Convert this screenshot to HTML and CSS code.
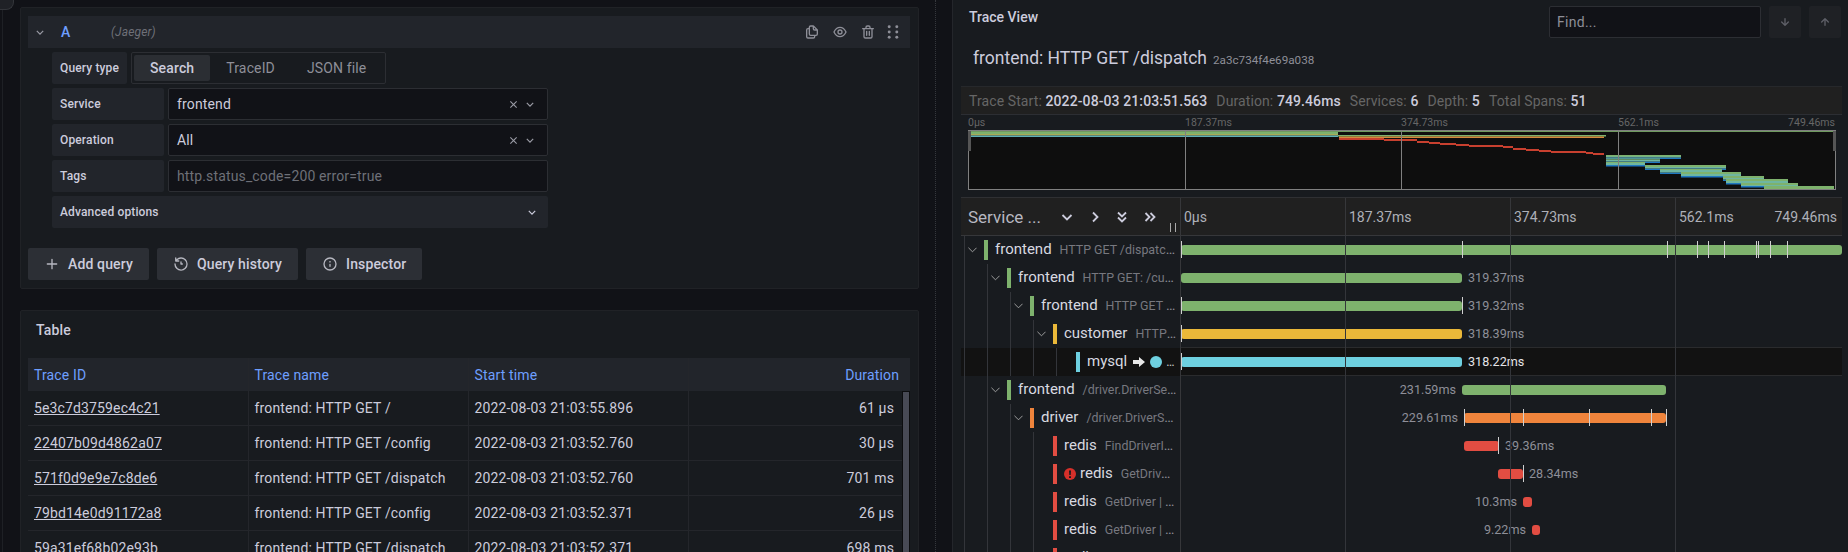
FILE: index.html
```html
<!DOCTYPE html>
<html lang="en">
<head>
<meta charset="utf-8">
<title>Explore</title>
<link rel="stylesheet" href="styles.css">
</head>
<body>
<main class="page">
  <section class="pane">
    <div class="corner"></div>
    <div class="card query-card">
      <div class="query-head">
        <svg class="chev head-chev" viewBox="0 0 10 6"><path d="M1 1l4 4 4-4"/></svg>
        <span class="ref">A</span>
        <span class="ds">(Jaeger)</span>
        <div class="head-actions">
          <svg class="ico" viewBox="0 0 24 24"><path d="M21,8.94a1.31,1.31,0,0,0-.06-.27l0-.09a1.07,1.07,0,0,0-.19-.28h0l-6-6h0a1.07,1.07,0,0,0-.28-.19.32.32,0,0,0-.09,0A.88.88,0,0,0,14.05,2H10A3,3,0,0,0,7,5V6H6A3,3,0,0,0,3,9V19a3,3,0,0,0,3,3h8a3,3,0,0,0,3-3V18h1a3,3,0,0,0,3-3V9S21,9,21,8.94ZM15,5.41,17.59,8H16a1,1,0,0,1-1-1ZM15,19a1,1,0,0,1-1,1H6a1,1,0,0,1-1-1V9A1,1,0,0,1,6,8H7v7a3,3,0,0,0,3,3h5Zm4-4a1,1,0,0,1-1,1H10a1,1,0,0,1-1-1V5a1,1,0,0,1,1-1h3V7a3,3,0,0,0,3,3h3Z"/></svg>
          <svg class="ico" viewBox="0 0 24 24"><path d="M21.92,11.6C19.9,6.91,16.1,4,12,4S4.1,6.91,2.08,11.6a1,1,0,0,0,0,.8C4.1,17.09,7.9,20,12,20s7.9-2.91,9.92-7.6A1,1,0,0,0,21.92,11.6ZM12,18c-3.17,0-6.17-2.29-7.9-6C5.83,8.29,8.83,6,12,6s6.17,2.29,7.9,6C18.17,15.71,15.17,18,12,18ZM12,8a4,4,0,1,0,4,4A4,4,0,0,0,12,8Zm0,6a2,2,0,1,1,2-2A2,2,0,0,1,12,14Z"/></svg>
          <svg class="ico" viewBox="0 0 24 24"><path d="M10,18a1,1,0,0,0,1-1V11a1,1,0,0,0-2,0v6A1,1,0,0,0,10,18ZM20,6H16V5a3,3,0,0,0-3-3H11A3,3,0,0,0,8,5V6H4A1,1,0,0,0,4,8H5V19a3,3,0,0,0,3,3h8a3,3,0,0,0,3-3V8h1a1,1,0,0,0,0-2ZM10,5a1,1,0,0,1,1-1h2a1,1,0,0,1,1,1V6H10Zm7,14a1,1,0,0,1-1,1H8a1,1,0,0,1-1-1V8H17Zm-3-1a1,1,0,0,0,1-1V11a1,1,0,0,0-2,0v6A1,1,0,0,0,14,18Z"/></svg>
          <svg class="ico drag" viewBox="0 0 24 24"><circle cx="6.300" cy="4" r="2.200"/><circle cx="6.300" cy="12" r="2.200"/><circle cx="6.300" cy="20" r="2.200"/><circle cx="17.700" cy="4" r="2.200"/><circle cx="17.700" cy="12" r="2.200"/><circle cx="17.700" cy="20" r="2.200"/></svg>
        </div>
      </div>
      <div class="form">
        <div class="form-row">
          <label class="lbl lbl-auto">Query type</label>
          <div class="radio">
            <span class="radio-opt active">Search</span>
            <span class="radio-opt">TraceID</span>
            <span class="radio-opt">JSON file</span>
          </div>
        </div>
        <div class="form-row">
          <label class="lbl">Service</label>
          <div class="input"><span>frontend</span>
            <svg class="x" viewBox="0 0 10 10"><path d="M1.500 1.500l7 7M8.500 1.500l-7 7"/></svg>
            <svg class="chev" viewBox="0 0 10 6"><path d="M1 1l4 4 4-4"/></svg>
          </div>
        </div>
        <div class="form-row">
          <label class="lbl">Operation</label>
          <div class="input"><span>All</span>
            <svg class="x" viewBox="0 0 10 10"><path d="M1.500 1.500l7 7M8.500 1.500l-7 7"/></svg>
            <svg class="chev" viewBox="0 0 10 6"><path d="M1 1l4 4 4-4"/></svg>
          </div>
        </div>
        <div class="form-row">
          <label class="lbl">Tags</label>
          <div class="input placeholder"><span>http.status_code=200 error=true</span></div>
        </div>
        <div class="form-row">
          <div class="advanced"><span>Advanced options</span>
            <svg class="chev strong" viewBox="0 0 10 6"><path d="M1 1l4 4 4-4"/></svg>
          </div>
        </div>
      </div>
      <div class="buttons">
        <button class="btn"><svg class="ico btn-ico" viewBox="0 0 24 24"><path d="M19,11H13V5a1,1,0,0,0-2,0v6H5a1,1,0,0,0,0,2h6v6a1,1,0,0,0,2,0V13h6a1,1,0,0,0,0-2Z"/></svg>Add query</button>
        <button class="btn"><svg class="ico btn-ico" viewBox="0 0 24 24"><path d="M12,2A10,10,0,0,0,5.120,4.770V3a1,1,0,0,0-2,0V7.500a1,1,0,0,0,1,1H8.620a1,1,0,0,0,0-2H6.220A8,8,0,1,1,4,12a1,1,0,0,0-2,0A10,10,0,1,0,12,2Zm0,6a1,1,0,0,0-1,1v3a1,1,0,0,0,1,1h2a1,1,0,0,0,0-2H13V9A1,1,0,0,0,12,8Z"/></svg>Query history</button>
        <button class="btn"><svg class="ico btn-ico" viewBox="0 0 24 24"><path d="M12,2A10,10,0,1,0,22,12,10,10,0,0,0,12,2Zm0,18a8,8,0,1,1,8-8A8,8,0,0,1,12,20Zm0-8.500a1,1,0,0,0-1,1v3a1,1,0,0,0,2,0v-3A1,1,0,0,0,12,11.500Zm0-4a1.250,1.250,0,1,0,1.250,1.250A1.250,1.250,0,0,0,12,7.500Z"/></svg>Inspector</button>
      </div>
    </div>

    <div class="card table-card">
      <h2 class="table-title">Table</h2>
      <div class="tbl">
        <div class="tr th">
          <div class="c">Trace ID</div><div class="c">Trace name</div><div class="c">Start time</div><div class="c r">Duration</div>
        </div>
        <div class="tbody">
          <div class="tr"><div class="c"><a href="#">5e3c7d3759ec4c21</a></div><div class="c">frontend: HTTP GET /</div><div class="c">2022-08-03 21:03:55.896</div><div class="c r">61 μs</div></div>
          <div class="tr"><div class="c"><a href="#">22407b09d4862a07</a></div><div class="c">frontend: HTTP GET /config</div><div class="c">2022-08-03 21:03:52.760</div><div class="c r">30 μs</div></div>
          <div class="tr"><div class="c"><a href="#">571f0d9e9e7c8de6</a></div><div class="c">frontend: HTTP GET /dispatch</div><div class="c">2022-08-03 21:03:52.760</div><div class="c r">701 ms</div></div>
          <div class="tr"><div class="c"><a href="#">79bd14e0d91172a8</a></div><div class="c">frontend: HTTP GET /config</div><div class="c">2022-08-03 21:03:52.371</div><div class="c r">26 μs</div></div>
          <div class="tr"><div class="c"><a href="#">59a31ef68b02e93b</a></div><div class="c">frontend: HTTP GET /dispatch</div><div class="c">2022-08-03 21:03:52.371</div><div class="c r">698 ms</div></div>
          <div class="scroll"></div>
        </div>
      </div>
    </div>
  </section>

  <div class="splitter"></div>

  <section class="trace">
    <div class="trace-top">
      <h2 class="trace-panel-title">Trace View</h2>
      <div class="find">Find...</div>
      <button class="nav"><svg class="ico" viewBox="0 0 24 24"><path d="M17.710,11.290a1,1,0,0,0-1.420,0L13,14.590V7a1,1,0,0,0-2,0v7.590l-3.290-3.300a1,1,0,0,0-1.420,1.420l5,5a1,1,0,0,0,1.420,0l5-5A1,1,0,0,0,17.710,11.290Z"/></svg></button>
      <button class="nav"><svg class="ico" viewBox="0 0 24 24"><path d="M17.710,11.290l-5-5a1,1,0,0,0-1.420,0l-5,5a1,1,0,0,0,1.420,1.420L11,9.410V17a1,1,0,0,0,2,0V9.410l3.290,3.300a1,1,0,0,0,1.420-1.420Z"/></svg></button>
    </div>
    <div class="trace-title"><span class="tt-name">frontend: HTTP GET /dispatch</span><span class="tt-id">2a3c734f4e69a038</span></div>
    <div class="stats">
      <span>Trace Start: <b>2022-08-03 21:03:51.563</b></span>
      <span>Duration: <b>749.46ms</b></span>
      <span>Services: <b>6</b></span>
      <span>Depth: <b>5</b></span>
      <span>Total Spans: <b>51</b></span>
    </div>
    <div class="mini-labels">
      <span>0μs</span><span>187.37ms</span><span>374.73ms</span><span class="mini-last"><span>562.1ms</span><span>749.46ms</span></span>
    </div>
    <svg class="mini" viewBox="968 130 868 60" width="868" height="60">
      <rect x="968" y="130" width="868" height="60" fill="#0e0e0e"/>
      <rect x="970" y="131" width="865" height="1" fill="#6f9a5f"/>
      <rect x="970" y="132" width="368" height="2" fill="#7eb26d"/>
      <rect x="970" y="134" width="368" height="1.500" fill="#a9ab55"/>
      <rect x="970" y="135.500" width="368" height="1.500" fill="#5fb0b7"/>
      <rect x="1338" y="135" width="268" height="1.500" fill="#7eb26d"/>
      <rect x="1339" y="136.500" width="265" height="1.500" fill="#d58a3c"/>
      <g fill="#c8402f">
        <rect x="1339" y="138" width="45" height="2"/><rect x="1384" y="139" width="33" height="2"/>
        <rect x="1417" y="141" width="12" height="2"/><rect x="1429" y="142" width="11" height="2"/>
        <rect x="1440" y="143" width="16" height="2"/><rect x="1456" y="144" width="13" height="2"/>
        <rect x="1469" y="145" width="34" height="2"/><rect x="1503" y="146" width="10" height="2"/>
        <rect x="1513" y="148" width="13" height="2"/><rect x="1526" y="149" width="13" height="2"/>
        <rect x="1539" y="150" width="12" height="2"/><rect x="1551" y="151" width="35" height="2"/>
        <rect x="1586" y="152" width="7" height="2"/><rect x="1593" y="153" width="11" height="2"/>
      </g>
      <g fill="#1f78c1">
        <rect x="1606" y="157.500" width="75" height="1.500"/><rect x="1606" y="161.500" width="54" height="1.500"/><rect x="1606" y="165" width="39" height="1.500"/>
        <rect x="1645" y="168.500" width="81" height="1.500"/><rect x="1660" y="172.500" width="62" height="1.500"/><rect x="1681" y="176" width="60" height="1.500"/>
        <rect x="1723" y="179.500" width="41" height="1.500"/><rect x="1726" y="183" width="62" height="1.500"/><rect x="1741" y="186" width="57" height="1.500"/>
      </g>
      <g fill="#6fb6a0">
        <rect x="1606" y="156" width="75" height="1.500"/><rect x="1606" y="159.500" width="54" height="2"/><rect x="1606" y="163" width="39" height="2"/>
        <rect x="1645" y="167" width="81" height="1.500"/><rect x="1660" y="170" width="62" height="2.500"/><rect x="1681" y="174" width="60" height="2"/>
        <rect x="1723" y="178" width="41" height="1.500"/><rect x="1726" y="181" width="62" height="2"/><rect x="1741" y="185" width="57" height="1"/>
      </g>
      <g fill="#7eb26d">
        <rect x="1606" y="155" width="75" height="1.500"/><rect x="1606" y="158.500" width="54" height="1"/><rect x="1606" y="162" width="39" height="1"/>
        <rect x="1645" y="165" width="81" height="2"/><rect x="1660" y="169" width="62" height="1"/><rect x="1681" y="172" width="60" height="2"/>
        <rect x="1723" y="176" width="41" height="2"/><rect x="1726" y="179" width="62" height="2"/><rect x="1741" y="183" width="57" height="2"/>
        <rect x="1764" y="186" width="70" height="3"/>
      </g>
      <g fill="#808080">
        <rect x="968" y="130" width="1" height="60"/><rect x="1835" y="130" width="1" height="60"/>
        <rect x="968" y="130" width="868" height="1"/><rect x="968" y="189" width="868" height="1"/>
        <rect x="1185" y="130" width="1" height="60"/><rect x="1401" y="130" width="1" height="60"/><rect x="1618" y="130" width="1" height="60"/>
      </g>
      <rect x="968" y="131" width="3" height="20" fill="#555"/>
      <rect x="1833" y="131" width="3" height="20" fill="#555"/>
    </svg>

    <div class="tv-head">
      <div class="tv-left">
        <span class="tv-service">Service ...</span>
        <div class="tv-ctrls">
          <svg class="ctl" viewBox="0 0 12 12"><path d="M1.500 4l4.500 4.500L10.500 4"/></svg>
          <svg class="ctl" viewBox="0 0 12 12"><path d="M4 1.500L8.500 6 4 10.500"/></svg>
          <svg class="ctl" viewBox="0 0 12 12"><path d="M2 1.500l4 4 4-4M2 6.500l4 4 4-4"/></svg>
          <svg class="ctl" viewBox="0 0 12 12"><path d="M1.500 2l4 4-4 4M6.500 2l4 4-4 4"/></svg>
        </div>
        <span class="tv-grip"></span>
      </div>
      <div class="tv-ticks"><span>0μs</span><span>187.37ms</span><span>374.73ms</span><span class="tv-last"><span>562.1ms</span><span>749.46ms</span></span></div>
    </div>

    <div class="rows">
      <div class="grid-lines"><i></i><i></i><i></i></div>

      <div class="row">
        <div class="left"><span class="slot"><svg class="tw" viewBox="0 0 10 6"><path d="M.500.500L5 5 9.500.500"/></svg></span><span class="sbar green"></span><span class="txt"><b>frontend</b><em>HTTP GET /dispatch | GET /dispatch</em></span></div>
        <div class="tl">
          <span class="bar green" style="left:0;width:661px"></span>
          <i class="t" style="left:0"></i><i class="t" style="left:281px"></i><i class="t" style="left:486px"></i><i class="t" style="left:516px"></i><i class="t" style="left:527px"></i><i class="t" style="left:543px"></i><i class="t" style="left:575px"></i><i class="t" style="left:577px"></i><i class="t" style="left:589px"></i><i class="t" style="left:606px"></i>
        </div>
      </div>

      <div class="row">
        <div class="left"><span class="g"></span><span class="slot"><svg class="tw" viewBox="0 0 10 6"><path d="M.500.500L5 5 9.500.500"/></svg></span><span class="sbar green"></span><span class="txt"><b>frontend</b><em>HTTP GET: /customer | GET /customer</em></span></div>
        <div class="tl"><span class="bar green" style="left:0;width:281px"></span><span class="dur" style="left:287px">319.37ms</span></div>
      </div>

      <div class="row">
        <div class="left"><span class="g"></span><span class="g"></span><span class="slot"><svg class="tw" viewBox="0 0 10 6"><path d="M.500.500L5 5 9.500.500"/></svg></span><span class="sbar green"></span><span class="txt"><b>frontend</b><em>HTTP GET | GET /customer request</em></span></div>
        <div class="tl"><span class="bar green" style="left:0;width:281px"></span><i class="t" style="left:0"></i><i class="t" style="left:281px"></i><span class="dur" style="left:287px">319.32ms</span></div>
      </div>

      <div class="row">
        <div class="left"><span class="g"></span><span class="g"></span><span class="g"></span><span class="slot"><svg class="tw" viewBox="0 0 10 6"><path d="M.500.500L5 5 9.500.500"/></svg></span><span class="sbar yellow"></span><span class="txt"><b>customer</b><em>HTTP GET /customer request</em></span></div>
        <div class="tl"><span class="bar yellow" style="left:0;width:281px"></span><i class="t" style="left:0"></i><span class="dur" style="left:287px">318.39ms</span></div>
      </div>

      <div class="row row-hl">
        <div class="left"><span class="g"></span><span class="g"></span><span class="g"></span><span class="g"></span><span class="slot"></span><span class="sbar cyan"></span><span class="txt"><b>mysql</b><svg class="peer" viewBox="0 0 12 10"><path d="M0 3h6V0l6 5-6 5V7H0z"/></svg><span class="dot"></span><em>…</em></span></div>
        <div class="tl"><span class="bar cyan" style="left:0;width:281px"></span><i class="t" style="left:0"></i><span class="dur bright" style="left:287px">318.22ms</span></div>
      </div>

      <div class="row">
        <div class="left"><span class="g"></span><span class="slot"><svg class="tw" viewBox="0 0 10 6"><path d="M.500.500L5 5 9.500.500"/></svg></span><span class="sbar green"></span><span class="txt"><b>frontend</b><em>/driver.DriverService/FindNearest</em></span></div>
        <div class="tl"><span class="bar green" style="left:281px;width:204px"></span><span class="dur end" style="right:386px">231.59ms</span></div>
      </div>

      <div class="row">
        <div class="left"><span class="g"></span><span class="g"></span><span class="slot"><svg class="tw" viewBox="0 0 10 6"><path d="M.500.500L5 5 9.500.500"/></svg></span><span class="sbar orange"></span><span class="txt"><b>driver</b><em>/driver.DriverService/FindNearest</em></span></div>
        <div class="tl"><span class="bar orange" style="left:283px;width:202px"></span><i class="t" style="left:283px"></i><i class="t" style="left:342px"></i><i class="t" style="left:408px"></i><i class="t" style="left:470px"></i><i class="t" style="left:485px"></i><span class="dur end" style="right:384px">229.61ms</span></div>
      </div>

      <div class="row">
        <div class="left"><span class="g"></span><span class="g"></span><span class="g"></span><span class="slot"></span><span class="sbar red"></span><span class="txt"><b>redis</b><em>FindDriverIDs | FindDriverIDs</em></span></div>
        <div class="tl"><span class="bar red" style="left:283px;width:35px"></span><i class="t" style="left:317px"></i><span class="dur" style="left:324px">39.36ms</span></div>
      </div>

      <div class="row">
        <div class="left"><span class="g"></span><span class="g"></span><span class="g"></span><span class="slot"></span><span class="sbar red"></span><span class="txt"><svg class="err" viewBox="0 0 12 12"><circle cx="6" cy="6" r="6"/><path class="err-mark" d="M5 2.500h2L6.700 7H5.300zM5 8.200h2V10H5z"/></svg><b>redis</b><em>GetDriver | GetDriver</em></span></div>
        <div class="tl"><span class="bar red" style="left:317px;width:25px"></span><i class="t" style="left:342px"></i><span class="dur" style="left:348px">28.34ms</span></div>
      </div>

      <div class="row">
        <div class="left"><span class="g"></span><span class="g"></span><span class="g"></span><span class="slot"></span><span class="sbar red"></span><span class="txt"><b>redis</b><em>GetDriver | GetDriver</em></span></div>
        <div class="tl"><span class="bar red" style="left:342px;width:9px"></span><span class="dur end" style="right:325px">10.3ms</span></div>
      </div>

      <div class="row">
        <div class="left"><span class="g"></span><span class="g"></span><span class="g"></span><span class="slot"></span><span class="sbar red"></span><span class="txt"><b>redis</b><em>GetDriver | GetDriver</em></span></div>
        <div class="tl"><span class="bar red" style="left:351px;width:8px"></span><span class="dur end" style="right:316px">9.22ms</span></div>
      </div>

      <div class="row">
        <div class="left"><span class="g"></span><span class="g"></span><span class="g"></span><span class="slot"></span><span class="sbar red"></span><span class="txt"><b>redis</b><em>GetDriver | GetDriver</em></span></div>
        <div class="tl"></div>
      </div>
    </div>
  </section>
</main>
</body>
</html>
```

FILE: styles.css
```css
* { box-sizing: border-box; }
html, body { margin: 0; height: 100%; background: #111217; overflow: hidden; }
body { font-family: Roboto, "Liberation Sans", sans-serif; color: #ccccdc; font-size: 14px; }
.page { display: flex; width: 1848px; height: 552px; overflow: hidden; }

/* left pane */
.pane { position: relative; width: 933px; margin-left: 2px; border-left: 1px solid #1e2025; padding: 7px 0 0 17px; display: flex; flex-direction: column; gap: 21px; flex: none; letter-spacing: 0.01em; }
.corner { position: absolute; left: -3px; top: 0; width: 14px; height: 10px; background: #1f2126; border-radius: 0 0 8px 0; border: 1px solid #33353a; border-width: 0 1px 1px 0; }
.card { width: 899px; background: #181b1f; border: 1px solid #202226; border-radius: 2px; padding: 8px 8px 8px 7px; flex: none; }
.query-head { display: flex; align-items: center; height: 32px; background: #22252b; padding-left: 8px; }
.chev { width: 8px; height: 5px; fill: none; stroke: #9a9ba5; stroke-width: 1.500; flex: none; }
.ref { color: #6e9fff; font-size: 14px; font-weight: 500; margin-left: 17px; width: 50px; }
.ds { color: #6e7078; font-size: 12px; font-style: italic; }
.head-actions { margin-left: auto; display: flex; gap: 12px; padding-right: 9px; }
.ico { fill: #8e8f98; flex: none; width: 16px; height: 16px; }
.ico.drag { margin-left: -3px; }
.form { display: flex; flex-direction: column; gap: 4px; margin: 4px 0 0 24px; width: 496px; }
.form-row { display: flex; gap: 4px; height: 32px; }
.lbl { width: 112px; background: #22252b; border-radius: 2px; padding: 0 8px; display: flex; align-items: center; font-size: 12px; font-weight: 500; color: #ccccdc; flex: none; white-space: nowrap; }
.lbl-auto { width: 75px; }
.radio { display: flex; align-items: center; border: 1px solid #2c2e33; border-radius: 2px; padding: 0 3px 0 2px; height: 32px; }
.radio-opt { height: 26px; display: flex; align-items: center; color: #8e8f98; font-size: 14px; padding: 0 16px; border-radius: 2px; white-space: nowrap; }
.radio-opt.active { background: #2b2e33; color: #ccccdc; font-weight: 500; }
.input { flex: 1; display: flex; align-items: center; background: #111217; border: 1px solid #2c2e33; border-radius: 2px; padding: 0 13px 0 8px; font-size: 14px; }
.input span { flex: 1; }
.input .x { width: 9px; height: 9px; fill: none; stroke: #9a9ba5; stroke-width: 1.200; margin-right: 8px; }
.placeholder { color: #6e7078; }
.advanced { flex: 1; display: flex; align-items: center; justify-content: space-between; background: #22252b; border-radius: 2px; padding: 0 12px 0 8px; font-size: 12px; font-weight: 500; }
.chev.strong { stroke: #ccccdc; }
.buttons { display: flex; gap: 8px; margin-top: 20px; }
.btn { display: flex; align-items: center; gap: 8px; height: 32px; border: 0; border-radius: 2px; background: #2c2f35; color: #ccccdc; font: 500 14px Roboto, sans-serif; letter-spacing: 0.01em; padding: 0 16px; }
.btn-ico { fill: #b7b8c1; }

.table-card { padding: 0 8px 0 7px; height: 300px; }
.table-title { margin: 0; height: 47px; padding: 11px 0 0 8px; font-size: 14px; font-weight: 500; color: #ccccdc; line-height: 16px; }
.tbl { width: 882px; position: relative; }
.tr { display: grid; grid-template-columns: 220.500px 220px 220.500px 1fr; height: 35px; border-bottom: 1px solid #24262b; }
.c { display: flex; align-items: center; padding: 0 6px; border-right: 1px solid #24262b; font-size: 14px; white-space: nowrap; }
.c:last-child { border-right: 0; justify-content: flex-end; padding-right: 8px; }
.c a { color: #ccccdc; }
.th { height: 33px; background: #22252b; border-bottom: 0; }
.th .c { color: #6e9fff; }
.th .c:last-child { padding-right: 11px; }
.tbody { position: relative; width: 874px; }
.scroll { position: absolute; top: 0; left: 874px; width: 8px; height: 200px; background: #484a55; border: 1px solid #0c0d0f; border-bottom: 0; }

.splitter { width: 17px; border-left: 1px dotted #35373c; flex: none; }

/* trace pane */
.trace { width: 896px; background: #181b1f; border-left: 1px solid #24262b; padding: 0 6px 0 8px; flex: none; }
.trace-top { display: flex; align-items: flex-start; padding-top: 6px; height: 41px; gap: 8px; }
.trace-panel-title { margin: 0 auto 0 0; padding: 3px 0 0 8px; font-size: 14px; font-weight: 500; line-height: 16px; color: #ccccdc; }
.find { width: 212px; height: 32px; background: #111217; border: 1px solid #2c2e33; border-radius: 2px; padding: 0 7px; display: flex; align-items: center; color: #8e8f98; font-size: 14px; letter-spacing: 0.02em; }
.nav { width: 32px; height: 32px; background: #1f2125; border: 0; border-radius: 2px; display: flex; align-items: center; justify-content: center; padding: 0; }
.nav .ico { fill: #5f6068; }
.trace-top .nav:last-child { margin-right: 1px; }
.trace-title { height: 45px; padding: 4px 0 0 12px; display: flex; align-items: baseline; gap: 6px; }
.tt-name { font-size: 17.500px; color: #ccccdc; line-height: 26px; }
.tt-id { font-size: 11.700px; color: #8e8f98; }
.stats { height: 29px; background: #202020; border-top: 1px solid #26282b; border-bottom: 1px solid #2c2e33; display: flex; align-items: center; gap: 9px; padding-left: 8px; color: #666; font-size: 14px; letter-spacing: 0.1px; white-space: nowrap; }
.stats b { color: #ccccdc; font-weight: 500; }
.mini-labels { display: grid; grid-template-columns: 217px 216px 217px 1fr; height: 15px; padding: 0 7px; font-size: 10.500px; color: #666; line-height: 15px; }
.mini-last { display: flex; justify-content: space-between; }
.mini { display: block; margin-left: 7px; }
.tv-head { display: flex; height: 39px; margin-top: 7px; background: #202020; border-top: 1px solid #2f3033; border-bottom: 1px solid #36373a; }
.tv-left { position: relative; width: 220px; flex: none; display: flex; align-items: center; padding-left: 7px; border-right: 1px solid #36373a; }
.tv-service { font-size: 17px; color: #b7b8c1; width: 90px; }
.tv-ctrls { display: flex; gap: 15.500px; margin-left: 3px; }
.ctl { width: 12px; height: 12px; fill: none; stroke: #ccccdc; stroke-width: 1.800; }
.tv-grip { position: absolute; right: 4px; bottom: 3px; width: 6px; height: 9px; border-left: 1px solid #aaa; border-right: 1px solid #aaa; }
.tv-ticks { flex: 1; display: grid; grid-template-columns: 165px 165px 165px 1fr; font-size: 14px; color: #aeb0b8; }
.tv-ticks > span { display: flex; align-items: center; padding: 0 5px 0 3px; border-right: 1px solid #36373a; }
.tv-ticks > span:last-child { border: 0; }
.tv-last { justify-content: space-between; }

.rows { position: relative; }
.grid-lines { position: absolute; left: 220px; top: 0; bottom: 0; display: flex; pointer-events: none; z-index: 2; }
.grid-lines i { display: block; width: 165px; border-right: 1px solid #33353a; }
.row { display: flex; height: 28px; position: relative; }
.left { width: 220px; flex: none; display: flex; align-items: stretch; padding-left: 3px; padding-right: 3px; border-right: 1px solid #36373a; overflow: hidden; white-space: nowrap; }
.g { width: 23px; flex: none; border-left: 1px solid #33353a; }
.slot { width: 20px; flex: none; border-left: 1px solid #33353a; display: flex; align-items: center; padding-left: 3px; }
.tw { width: 9px; height: 6px; fill: none; stroke: #aaa; stroke-width: 1; }
.sbar { width: 4px; height: 20px; margin-top: 4px; flex: none; }
.sbar.green { background: #7eb26d; } .sbar.yellow { background: #eab839; } .sbar.cyan { background: #6ed0e0; }
.sbar.orange { background: #ef843c; } .sbar.red { background: #e24d42; }
.txt { flex: 1; min-width: 0; padding-left: 7px; overflow: hidden; text-overflow: ellipsis; line-height: 27px; color: #8e8f98; }
.txt b { font-weight: 400; font-size: 15px; color: #d8d9e0; }
.txt em { font-style: normal; font-size: 12.400px; color: #77787f; margin-left: 8px; }
.peer { width: 12px; height: 10px; fill: #e8e8e8; margin-left: 6px; vertical-align: -1px; }
.dot { display: inline-block; width: 12px; height: 12px; border-radius: 50%; background: #6ed0e0; margin-left: 5px; vertical-align: -2px; }
.row-hl .left { padding-right: 0; }
.row-hl .txt em { margin-left: 4px; color: #ccc; }
.err { width: 12px; height: 12px; fill: #d6302a; margin-right: 4px; vertical-align: -2px; }
.err .err-mark { fill: #181b1f; }
.tl { flex: 1; position: relative; }
.bar { position: absolute; top: 9px; height: 10px; border-radius: 3px; }
.bar.green { background: #7eb26d; } .bar.yellow { background: #eab839; } .bar.cyan { background: #6ed0e0; }
.bar.orange { background: #ef843c; } .bar.red { background: #e24d42; }
.t { position: absolute; top: 5px; height: 17px; width: 1px; background: #d0d0d0; z-index: 3; }
.dur { position: absolute; top: 6px; font-size: 12.600px; line-height: 16px; color: #8e8f98; }
.dur.bright { color: #e4e4e8; }
.row-hl { background: #121212; }
.row-hl .tl { border-top: 1px solid #2a2b2d; border-bottom: 1px solid #2a2b2d; margin-top: -1px; height: 29px; }
```
